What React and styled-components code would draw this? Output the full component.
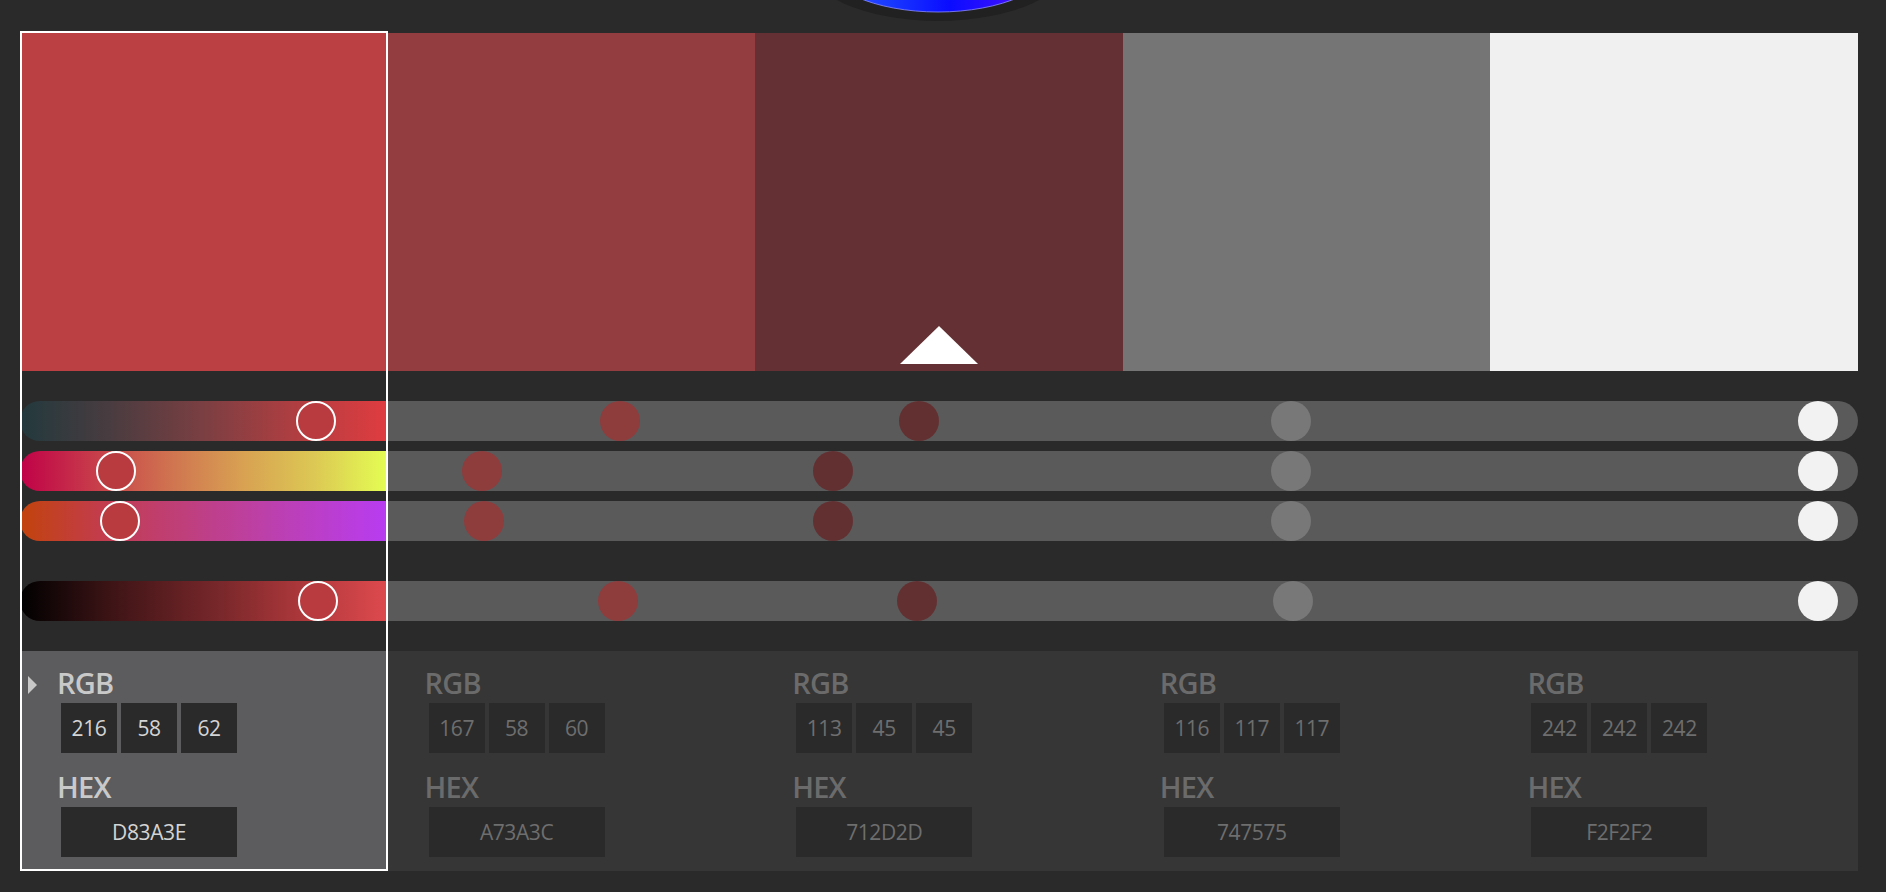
import React from 'react';
import styled, { createGlobalStyle } from 'styled-components';

const GlobalStyle = createGlobalStyle`
  html, body {
    margin: 0;
    padding: 0;
    background: #2a2a2a;
    overflow: hidden;
  }
  body {
    font-family: "Open Sans", "Liberation Sans", sans-serif;
  }
`;

const Page = styled.div`
  position: relative;
  width: 1886px;
  height: 892px;
  box-sizing: border-box;
  padding: 33px 28px 0 20px;
  background: #2a2a2a;
`;

const Wheel = styled.svg`
  position: absolute;
  top: 0;
  left: 798px;
  display: block;
`;

const Palette = styled.div`
  display: grid;
  grid-template-columns: repeat(5, 1fr);
`;

const Column = styled.div`
  position: relative;
  display: flex;
  flex-direction: column;
  min-width: 0;

  &::after {
    content: '';
    display: ${(p) => (p.$selected ? 'block' : 'none')};
    position: absolute;
    top: -2px;
    left: 0;
    right: 0;
    bottom: 0;
    border: 2px solid #ffffff;
    pointer-events: none;
  }
`;

const Swatch = styled.div`
  position: relative;
  height: 338px;
  background: ${(p) => p.$color};
`;

const Marker = styled.svg`
  position: absolute;
  left: 50%;
  bottom: 6px;
  margin-left: -40px;
  display: block;
`;

const Sliders = styled.div`
  display: flex;
  flex-direction: column;
  margin-top: 30px;
`;

const Track = styled.div`
  position: relative;
  height: 40px;
  margin-top: ${(p) => p.$gap}px;
  background: ${(p) => p.$fill};
  border-radius: ${(p) => p.$radius};
`;

const Knob = styled.div`
  position: absolute;
  top: 0;
  width: 40px;
  height: 40px;
  box-sizing: border-box;
  border-radius: 50%;
  background: ${(p) => p.$color};
  border: ${(p) => (p.$selected ? '2px solid #ffffff' : 'none')};
`;

const Panel = styled.div`
  margin-top: 30px;
  height: 220px;
  box-sizing: border-box;
  padding: 17px 0 0 8px;
  background: ${(p) => (p.$selected ? '#5c5c5e' : '#363636')};
`;

const LabelRow = styled.div`
  display: flex;
  margin-top: ${(p) => p.$gap}px;
`;

const MarkerSlot = styled.div`
  width: 29px;
  flex: none;
`;

const Caret = styled.div`
  width: 0;
  height: 0;
  margin-top: 8px;
  border-left: 9px solid #c8c8c8;
  border-top: 9px solid transparent;
  border-bottom: 9px solid transparent;
`;

const Label = styled.div`
  font-size: 29px;
  line-height: 30px;
  font-weight: 600;
  letter-spacing: -0.8px;
  color: ${(p) => (p.$selected ? '#c9c9c9' : '#6b6b6b')};
`;

const Fields = styled.div`
  display: flex;
  gap: 4px;
  margin-top: 5px;
  padding-left: 33px;
`;

const Field = styled.div`
  width: ${(p) => p.$width}px;
  height: 50px;
  display: flex;
  align-items: center;
  justify-content: center;
  background: #2a2a2a;
  font-size: 21px;
  letter-spacing: -0.4px;
  color: ${(p) => (p.$selected ? '#d4d4d4' : '#6e6e6e')};
`;

const gradients = [
  'linear-gradient(to right, #22393d 0%, #4a3c40 25%, #7b3f42 50%, #b03e41 75%, #e03c40 100%)',
  'linear-gradient(to right, #c00048 0%, #c8424a 22%, #d07650 42%, #d8a052 60%, #dcc854 80%, #e4fe52 100%)',
  'linear-gradient(to right, #c2430c 0%, #c23c4c 22%, #bf3f7c 45%, #bc40ac 68%, #b83cf2 100%)',
  'linear-gradient(to right, #000000 0%, #3e1416 25%, #7a282b 55%, #b53a3d 80%, #de4a4e 100%)',
];

const trackGaps = [0, 10, 10, 40];

const swatches = [
  { fill: '#bb4043', knob: '#b93b3f', rgb: [216, 58, 62], hex: 'D83A3E', knobs: [296, 95.7, 99.7, 297.7] },
  { fill: '#933d40', knob: '#8f3c3d', rgb: [167, 58, 60], hex: 'A73A3C', knobs: [232.4, 94.4, 96.4, 230.4] },
  { fill: '#643033', knob: '#633032', rgb: [113, 45, 45], hex: '712D2D', knobs: [163.8, 77.8, 77.8, 161.8], marker: true },
  { fill: '#757575', knob: '#787878', rgb: [116, 117, 117], hex: '747575', knobs: [167.9, 167.9, 167.9, 169.9] },
  { fill: '#f0f0f0', knob: '#f2f2f2', rgb: [242, 242, 242], hex: 'F2F2F2', knobs: [327.3, 327.3, 327.3, 327.3] },
];

const selectedIndex = 0;

function radiusFor(index) {
  if (index === 0) return '20px 0 0 20px';
  if (index === swatches.length - 1) return '0 20px 20px 0';
  return '0';
}

function SwatchColumn({ swatch, index }) {
  const selected = index === selectedIndex;

  return (
    <Column $selected={selected}>
      <Swatch $color={swatch.fill}>
        {swatch.marker && (
          <Marker width="80" height="40" viewBox="0 0 80 40">
            <polygon points="1,39 40,1 79,39" fill="#ffffff" />
          </Marker>
        )}
      </Swatch>

      <Sliders>
        {swatch.knobs.map((center, i) => (
          <Track
            key={i}
            $gap={trackGaps[i]}
            $fill={selected ? gradients[i] : '#5a5a5a'}
            $radius={radiusFor(index)}
          >
            <Knob
              $selected={selected}
              $color={swatch.knob}
              style={{ left: `${center - 20}px` }}
            />
          </Track>
        ))}
      </Sliders>

      <Panel $selected={selected}>
        <LabelRow $gap={0}>
          <MarkerSlot>{selected && <Caret />}</MarkerSlot>
          <Label $selected={selected}>RGB</Label>
        </LabelRow>
        <Fields>
          {swatch.rgb.map((value, i) => (
            <Field key={i} $width={56} $selected={selected}>
              {value}
            </Field>
          ))}
        </Fields>
        <LabelRow $gap={19}>
          <MarkerSlot />
          <Label $selected={selected}>HEX</Label>
        </LabelRow>
        <Fields>
          <Field $width={176} $selected={selected}>
            {swatch.hex}
          </Field>
        </Fields>
      </Panel>
    </Column>
  );
}

export default function App() {
  return (
    <>
      <GlobalStyle />
      <Page>
        <Wheel width="280" height="30" viewBox="0 0 280 30">
          <defs>
            <linearGradient id="wheelBlue" x1="0" y1="0" x2="1" y2="0">
              <stop offset="0%" stopColor="#3a5cff" />
              <stop offset="30%" stopColor="#1838ff" />
              <stop offset="55%" stopColor="#0a0cff" />
              <stop offset="80%" stopColor="#3a10ff" />
              <stop offset="100%" stopColor="#5a22ff" />
            </linearGradient>
          </defs>
          <ellipse cx="140" cy="-40" rx="134" ry="61" fill="#212121" />
          <ellipse cx="140" cy="-40" rx="116" ry="52" fill="url(#wheelBlue)" stroke="#8a8cff" strokeWidth="0.8" />
        </Wheel>
        <Palette>
          {swatches.map((swatch, index) => (
            <SwatchColumn key={swatch.hex} swatch={swatch} index={index} />
          ))}
        </Palette>
      </Page>
    </>
  );
}
